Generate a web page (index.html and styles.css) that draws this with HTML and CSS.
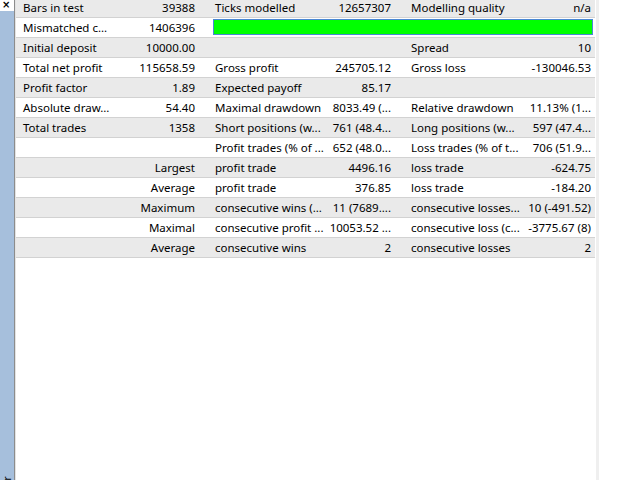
FILE: index.html
```html
<!DOCTYPE html>
<html>
<head>
<meta charset="utf-8">
<link rel="stylesheet" href="styles.css">
</head>
<body>
<div class="window">
  <aside class="dock">
    <div class="dock-head"><span class="close">×</span></div>
    <div class="dock-bar"><span class="vlabel">Tester</span></div>
  </aside>
  <div class="sep"></div>
  <main class="report">
    <div class="row alt first">
      <div class="lbl l1">Bars in test</div><div class="val">39388</div>
      <div class="lbl">Ticks modelled</div><div class="val">12657307</div>
      <div class="lbl">Modelling quality</div><div class="val">n/a</div>
    </div>
    <div class="row">
      <div class="lbl l1">Mismatched c...</div><div class="val">1406396</div>
      <div class="quality"><div class="qbar"></div></div>
    </div>
    <div class="row alt">
      <div class="lbl l1">Initial deposit</div><div class="val">10000.00</div>
      <div class="lbl"></div><div class="val"></div>
      <div class="lbl">Spread</div><div class="val">10</div>
    </div>
    <div class="row">
      <div class="lbl l1">Total net profit</div><div class="val">115658.59</div>
      <div class="lbl">Gross profit</div><div class="val">245705.12</div>
      <div class="lbl">Gross loss</div><div class="val">-130046.53</div>
    </div>
    <div class="row alt">
      <div class="lbl l1">Profit factor</div><div class="val">1.89</div>
      <div class="lbl">Expected payoff</div><div class="val">85.17</div>
      <div class="lbl"></div><div class="val"></div>
    </div>
    <div class="row">
      <div class="lbl l1">Absolute draw...</div><div class="val">54.40</div>
      <div class="lbl">Maximal drawdown</div><div class="val">8033.49 (...</div>
      <div class="lbl">Relative drawdown</div><div class="val">11.13% (1...</div>
    </div>
    <div class="row alt">
      <div class="lbl l1">Total trades</div><div class="val">1358</div>
      <div class="lbl">Short positions (w...</div><div class="val">761 (48.4...</div>
      <div class="lbl">Long positions (w...</div><div class="val">597 (47.4...</div>
    </div>
    <div class="row">
      <div class="lbl l1"></div><div class="val"></div>
      <div class="lbl">Profit trades (% of ...</div><div class="val">652 (48.0...</div>
      <div class="lbl">Loss trades (% of t...</div><div class="val">706 (51.9...</div>
    </div>
    <div class="row alt">
      <div class="lbl l1"></div><div class="val">Largest</div>
      <div class="lbl">profit trade</div><div class="val">4496.16</div>
      <div class="lbl">loss trade</div><div class="val">-624.75</div>
    </div>
    <div class="row">
      <div class="lbl l1"></div><div class="val">Average</div>
      <div class="lbl">profit trade</div><div class="val">376.85</div>
      <div class="lbl">loss trade</div><div class="val">-184.20</div>
    </div>
    <div class="row alt">
      <div class="lbl l1"></div><div class="val">Maximum</div>
      <div class="lbl">consecutive wins (...</div><div class="val">11 (7689....</div>
      <div class="lbl">consecutive losses...</div><div class="val">10 (-491.52)</div>
    </div>
    <div class="row">
      <div class="lbl l1"></div><div class="val">Maximal</div>
      <div class="lbl">consecutive profit ...</div><div class="val">10053.52 ...</div>
      <div class="lbl">consecutive loss (c...</div><div class="val">-3775.67 (8)</div>
    </div>
    <div class="row alt">
      <div class="lbl l1"></div><div class="val">Average</div>
      <div class="lbl">consecutive wins</div><div class="val">2</div>
      <div class="lbl">consecutive losses</div><div class="val">2</div>
    </div>
  </main>
  <div class="gap"></div>
  <div class="splitter"></div>
  <div class="rest"></div>
</div>
</body>
</html>
```

FILE: styles.css
```css
html, body {
  margin: 0;
  padding: 0;
  background: #ffffff;
}

body {
  font-family: "Noto Sans", "Open Sans", "DejaVu Sans", sans-serif;
  font-size: 11.5px;
  color: #000000;
  overflow: hidden;
}

.window {
  display: flex;
  width: 640px;
  height: 480px;
  overflow: hidden;
}

.dock {
  width: 14px;
  display: flex;
  flex-direction: column;
  flex-shrink: 0;
}

.dock-head {
  height: 11px;
  background: #ffffff;
  position: relative;
}

.close {
  position: absolute;
  left: 2px;
  top: 0;
  font-family: "DejaVu Sans", sans-serif;
  font-size: 10px;
  font-weight: bold;
  line-height: 9px;
}

.dock-bar {
  flex: 1;
  background: #a6bfdc;
  position: relative;
  overflow: hidden;
}

.vlabel {
  position: absolute;
  left: 1px;
  top: 494px;
  transform-origin: left top;
  transform: rotate(-90deg);
  font-size: 10px;
  line-height: 12px;
  white-space: nowrap;
  color: #000;
}

.sep {
  width: 1px;
  background: #8c8c8c;
  flex-shrink: 0;
}

.sep + .report {
  border-left: 1px solid #e3e3e3;
}

.report {
  width: 579px;
  flex-shrink: 0;
  display: flex;
  flex-direction: column;
}

.row {
  display: grid;
  grid-template-columns: 99px 84px 130px 66px 132px 68px;
  height: 19px;
  border-bottom: 1px solid #d2d2d2;
  background: #ffffff;
  line-height: 19px;
  flex-shrink: 0;
}

.row.first {
  margin-top: -2px;
}

.row.alt {
  background: #eaeaea;
}

.lbl, .val {
  white-space: nowrap;
  overflow: hidden;
}

.lbl {
  padding-left: 16px;
}

.lbl.l1 {
  padding-left: 7px;
}

.val {
  text-align: right;
  padding-right: 4px;
}

.quality {
  grid-column: 3 / 7;
  padding: 1px 2px 2px 14px;
}

.qbar {
  height: 14px;
  background: #00ff00;
  border: 1px solid #4a87d4;
}

.gap {
  width: 1px;
  flex-shrink: 0;
}

.splitter {
  width: 3px;
  background: #efefef;
  flex-shrink: 0;
}

.rest {
  flex: 1;
  background: #ffffff;
}
```
